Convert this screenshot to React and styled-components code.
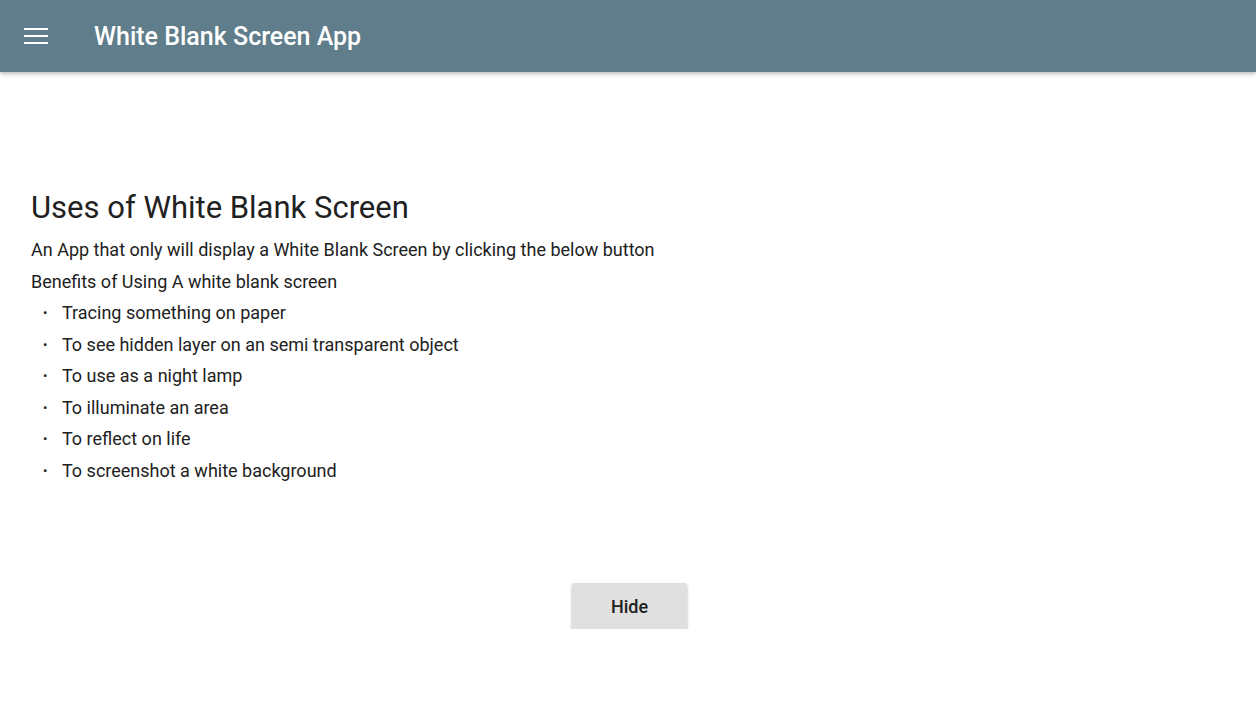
import React from "react";
import styled, { createGlobalStyle } from "styled-components";

const Global = createGlobalStyle`
  body { margin: 0; font-family: Roboto, "Noto Sans", sans-serif; background: #fff; color: #212121; }
`;
const Bar = styled.header`
  height: 72px; background: #607d8b; display: flex; align-items: center;
  box-shadow: 0 2px 4px rgba(0,0,0,0.25); color: #fff;
`;
const Menu = styled.div`
  width: 24px; margin-left: 24px; margin-right: 46px; display: flex; flex-direction: column; gap: 5px;
  span { display: block; height: 2px; background: #fff; }
`;
const Title = styled.h1`
  margin: 0; font-size: 25px; font-weight: 500;
`;
const Main = styled.main`
  padding: 116px 31px 0;
`;
const Heading = styled.h2`
  margin: 0 0 6px; font-size: 31px; font-weight: 400; line-height: 40px;
`;
const P = styled.p`
  margin: 0; font-size: 18px; line-height: 31.5px;
`;
const List = styled.ul`
  margin: 0; padding: 0; list-style: none;
`;
const Item = styled.li`
  font-size: 18px; line-height: 31.5px; padding-left: 31px; position: relative;
  &::before { content: "•"; position: absolute; left: 12px; font-size: 13px; }
`;
const Center = styled.div`
  display: flex; justify-content: center; margin-top: 97px;
`;
const Button = styled.button`
  width: 115px; height: 46px; border: none; border-radius: 2px; background: #e0e0e0;
  font-family: Roboto, sans-serif; font-size: 18px; font-weight: 500; color: #212121;
  box-shadow: 0 2px 3px rgba(0,0,0,0.3); margin-left: 3px;
`;
const items = ["Tracing something on paper","To see hidden layer on an semi transparent object","To use as a night lamp","To illuminate an area","To reflect on life","To screenshot a white background"];
export default function App() {
  return (<>
    <Global />
    <Bar><Menu><span/><span/><span/></Menu><Title>White Blank Screen App</Title></Bar>
    <Main>
      <Heading>Uses of White Blank Screen</Heading>
      <P>An App that only will display a White Blank Screen by clicking the below button</P>
      <P>Benefits of Using A white blank screen</P>
      <List>{items.map(t => <Item key={t}>{t}</Item>)}</List>
      <Center><Button>Hide</Button></Center>
    </Main>
  </>);
}
